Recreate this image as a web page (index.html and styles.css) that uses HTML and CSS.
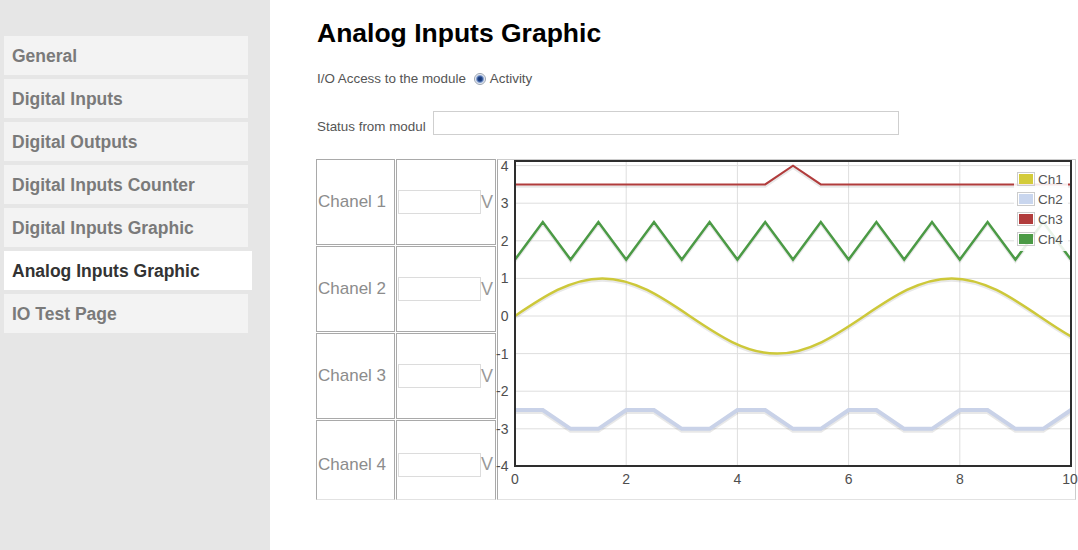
FILE: index.html
```html
<!DOCTYPE html>
<html>
<head>
<meta charset="utf-8">
<title>Analog Inputs Graphic</title>
<link rel="stylesheet" href="styles.css">
</head>
<body>
<div class="page">
  <nav class="sidebar">
    <a class="nav-item">General</a>
    <a class="nav-item">Digital Inputs</a>
    <a class="nav-item">Digital Outputs</a>
    <a class="nav-item">Digital Inputs Counter</a>
    <a class="nav-item">Digital Inputs Graphic</a>
    <a class="nav-item active">Analog Inputs Graphic</a>
    <a class="nav-item">IO Test Page</a>
  </nav>
  <main class="content">
    <h1 class="title">Analog Inputs Graphic</h1>
    <div class="access"><span>I/O Access to the module</span><span class="radio"></span><span>Activity</span></div>
    <div class="status"><span class="status-label">Status from modul</span><span class="status-box"></span></div>
    <table class="channels">
      <tr class="row">
        <td class="name">Chanel 1</td>
        <td class="val"><span class="vbox"></span><span class="unit">V</span></td>
        <td class="chart" rowspan="4">
          <svg class="plot" width="577" height="339" viewBox="0 0 577 339">
            <g class="grid">
              <line x1="17" y1="5.6" x2="573" y2="5.6"/>
              <line x1="17" y1="43.2" x2="573" y2="43.2"/>
              <line x1="17" y1="80.8" x2="573" y2="80.8"/>
              <line x1="17" y1="118.4" x2="573" y2="118.4"/>
              <line x1="17" y1="156" x2="573" y2="156"/>
              <line x1="17" y1="193.6" x2="573" y2="193.6"/>
              <line x1="17" y1="231.2" x2="573" y2="231.2"/>
              <line x1="17" y1="268.8" x2="573" y2="268.8"/>
              <line x1="128.2" y1="1" x2="128.2" y2="306"/>
              <line x1="239.4" y1="1" x2="239.4" y2="306"/>
              <line x1="350.6" y1="1" x2="350.6" y2="306"/>
              <line x1="461.8" y1="1" x2="461.8" y2="306"/>
            </g>
            <g class="ylabels">
              <text x="10.5" y="10.6">4</text>
              <text x="10.5" y="48.2">3</text>
              <text x="10.5" y="85.8">2</text>
              <text x="10.5" y="123.4">1</text>
              <text x="10.5" y="161">0</text>
              <text x="10.5" y="198.6">-1</text>
              <text x="10.5" y="236.2">-2</text>
              <text x="10.5" y="273.8">-3</text>
              <text x="10.5" y="311.4">-4</text>
            </g>
            <g class="xlabels">
              <text x="17" y="324">0</text>
              <text x="128.2" y="324">2</text>
              <text x="239.4" y="324">4</text>
              <text x="350.6" y="324">6</text>
              <text x="461.8" y="324">8</text>
              <text x="572" y="324">10</text>
            </g>
            <g class="series">
              <path class="shadow" d="M17,156 C45.48,136.74 72.73,118.4 104.34,118.4 C135.94,118.4 163.19,136.74 191.67,156 C220.16,175.26 247.4,193.6 279.01,193.6 C310.62,193.6 337.86,175.26 366.35,156 C394.83,136.74 422.07,118.4 453.68,118.4 C485.29,118.4 512.54,136.74 541.02,156 C551.68,163.21 562.34,170.41 573,176.45"/>
              <path class="ch1" d="M17,156 C45.48,136.74 72.73,118.4 104.34,118.4 C135.94,118.4 163.19,136.74 191.67,156 C220.16,175.26 247.4,193.6 279.01,193.6 C310.62,193.6 337.86,175.26 366.35,156 C394.83,136.74 422.07,118.4 453.68,118.4 C485.29,118.4 512.54,136.74 541.02,156 C551.68,163.21 562.34,170.41 573,176.45"/>
              <polyline class="shadow wide" points="17,250 44.8,250 72.6,268.8 100.4,268.8 128.2,250 156,250 183.8,268.8 211.6,268.8 239.4,250 267.2,250 295,268.8 322.8,268.8 350.6,250 378.4,250 406.2,268.8 434,268.8 461.8,250 489.6,250 517.4,268.8 545.2,268.8 573,250"/>
              <polyline class="ch2" points="17,250 44.8,250 72.6,268.8 100.4,268.8 128.2,250 156,250 183.8,268.8 211.6,268.8 239.4,250 267.2,250 295,268.8 322.8,268.8 350.6,250 378.4,250 406.2,268.8 434,268.8 461.8,250 489.6,250 517.4,268.8 545.2,268.8 573,250"/>
              <polyline class="shadow" points="17,24.4 267.2,24.4 295,5.6 322.8,24.4 573,24.4"/>
              <polyline class="ch3" points="17,24.4 267.2,24.4 295,5.6 322.8,24.4 573,24.4"/>
              <polyline class="shadow" points="17,99.6 44.8,62 72.6,99.6 100.4,62 128.2,99.6 156,62 183.8,99.6 211.6,62 239.4,99.6 267.2,62 295,99.6 322.8,62 350.6,99.6 378.4,62 406.2,99.6 434,62 461.8,99.6 489.6,62 517.4,99.6 545.2,62 573,99.6"/>
              <polyline class="ch4" points="17,99.6 44.8,62 72.6,99.6 100.4,62 128.2,99.6 156,62 183.8,99.6 211.6,62 239.4,99.6 267.2,62 295,99.6 322.8,62 350.6,99.6 378.4,62 406.2,99.6 434,62 461.8,99.6 489.6,62 517.4,99.6 545.2,62 573,99.6"/>
            </g>
            <rect class="frame" x="17" y="1" width="556" height="305"/>
            <g class="legend">
              <rect class="legend-bg" x="516" y="9" width="54" height="82"/>
              <rect class="sw-frame" x="519.5" y="12.5" width="17" height="13"/>
              <rect class="sw1" x="521" y="14" width="14" height="10"/>
              <text x="540" y="23.7">Ch1</text>
              <rect class="sw-frame" x="519.5" y="32.5" width="17" height="13"/>
              <rect class="sw2" x="521" y="34" width="14" height="10"/>
              <text x="540" y="43.7">Ch2</text>
              <rect class="sw-frame" x="519.5" y="52.5" width="17" height="13"/>
              <rect class="sw3" x="521" y="54" width="14" height="10"/>
              <text x="540" y="63.7">Ch3</text>
              <rect class="sw-frame" x="519.5" y="72.5" width="17" height="13"/>
              <rect class="sw4" x="521" y="74" width="14" height="10"/>
              <text x="540" y="83.7">Ch4</text>
            </g>
          </svg>
        </td>
      </tr>
      <tr class="row">
        <td class="name">Chanel 2</td>
        <td class="val"><span class="vbox"></span><span class="unit">V</span></td>
      </tr>
      <tr class="row">
        <td class="name">Chanel 3</td>
        <td class="val"><span class="vbox"></span><span class="unit">V</span></td>
      </tr>
      <tr class="row last">
        <td class="name">Chanel 4</td>
        <td class="val"><span class="vbox"></span><span class="unit">V</span></td>
      </tr>
    </table>
  </main>
</div>
</body>
</html>
```
FILE: styles.css
```css
html, body {
  margin: 0;
  height: 100%;
  overflow: hidden;
}

body {
  font-family: "Liberation Sans", Arial, sans-serif;
  background: #ffffff;
}

.page {
  display: flex;
  height: 550px;
}

/* ---------- sidebar ---------- */
.sidebar {
  width: 270px;
  flex: none;
  box-sizing: border-box;
  background: #e6e6e6;
  padding: 36px 0 0 4px;
  display: flex;
  flex-direction: column;
  align-items: flex-start;
  gap: 4px;
}

.nav-item {
  display: flex;
  align-items: center;
  box-sizing: border-box;
  width: 244px;
  height: 39px;
  padding: 2px 0 0 8px;
  background: #f3f3f3;
  color: #7a7a7a;
  font-weight: bold;
  font-size: 17.5px;
}

.nav-item.active {
  width: 248px;
  background: #ffffff;
  color: #333333;
}

/* ---------- content ---------- */
.content {
  flex: 1;
  padding-left: 46px;
}

.title {
  margin: 18px 0 0 1px;
  font-size: 26.5px;
  line-height: 30px;
  font-weight: bold;
  color: #000000;
}

.access {
  margin-top: 23px;
  margin-left: 1px;
  height: 16px;
  display: flex;
  align-items: center;
  font-size: 13.4px;
  line-height: 16px;
  color: #555555;
}

.radio {
  width: 12px;
  height: 12px;
  box-sizing: border-box;
  margin: 0 4px 0 8px;
  border-radius: 50%;
  border: 1px solid #9ba4b2;
  background: radial-gradient(circle, #12306a 0, #24488c 2.2px, #7c98cc 3.4px, #eef1f5 4.6px);
}

.status {
  margin-top: 24px;
  margin-left: 1px;
  height: 24px;
  display: flex;
  align-items: center;
  font-size: 13.4px;
  color: #555555;
}

.status-label {
  padding-top: 7px;
}

.status-box {
  width: 466px;
  height: 24px;
  box-sizing: border-box;
  margin-left: 7px;
  border: 1px solid #cfcfcf;
  background: #ffffff;
}

/* ---------- channels table ---------- */
.channels {
  margin: 23px 0 0 -1px;
  border-collapse: separate;
  border-spacing: 1px;
}

.channels td {
  padding: 0;
  border: 1px solid #a9a9a9;
}

.row {
  height: 86px;
}

.row.last {
  height: 80px;
}

.name {
  width: 76px;
  padding-left: 1px !important;
  font-size: 17px;
  color: #8c8c8c;
  white-space: nowrap;
}

.val {
  width: 98px;
  white-space: nowrap;
}

.row.last .name,
.row.last .val {
  padding-top: 9px !important;
  border-bottom-color: #e2e2e2;
}

.vbox {
  display: inline-block;
  vertical-align: middle;
  width: 83px;
  height: 24px;
  box-sizing: border-box;
  margin-left: 1px;
  border: 1px solid #dcdcdc;
  background: #ffffff;
}

.unit {
  display: inline-block;
  vertical-align: middle;
  font-size: 18px;
  color: #999999;
}

.chart {
  width: 577px;
  vertical-align: top;
  border-top-color: #cccccc !important;
  border-right-color: #cccccc !important;
  border-bottom-color: #e2e2e2 !important;
}

.plot {
  display: block;
  overflow: visible;
}

.grid line {
  stroke: #dedede;
  stroke-width: 1;
}

.ylabels text,
.xlabels text {
  font-family: "Liberation Sans", Arial, sans-serif;
  font-size: 14px;
  fill: #4e4e4e;
}

.ylabels text {
  text-anchor: end;
}

.xlabels text {
  text-anchor: middle;
}

.series path,
.series polyline {
  fill: none;
  stroke-linejoin: miter;
}

.shadow {
  stroke: #000000;
  stroke-opacity: 0.09;
  stroke-width: 2.5;
  transform: translate(0, 2px);
}

.shadow.wide {
  stroke-width: 4;
}

.ch1 {
  stroke: #cdc83a;
  stroke-width: 2.5;
}

.ch2 {
  stroke: #c9d2e8;
  stroke-width: 4;
}

.ch3 {
  stroke: #b13c3c;
  stroke-width: 2;
}

.ch4 {
  stroke: #4b9a45;
  stroke-width: 2.5;
}

.frame {
  fill: none;
  stroke: #2e2e2e;
  stroke-width: 2;
}

.legend-bg {
  fill: #ffffff;
  opacity: 0.88;
}

.sw-frame {
  fill: none;
  stroke: #cccccc;
  stroke-width: 1;
}

.sw1 { fill: #d3cb3a; }
.sw2 { fill: #c9d6ee; }
.sw3 { fill: #b13c3c; }
.sw4 { fill: #4b9a45; }

.legend text {
  font-family: "Liberation Sans", Arial, sans-serif;
  font-size: 13.5px;
  fill: #545454;
}
```
